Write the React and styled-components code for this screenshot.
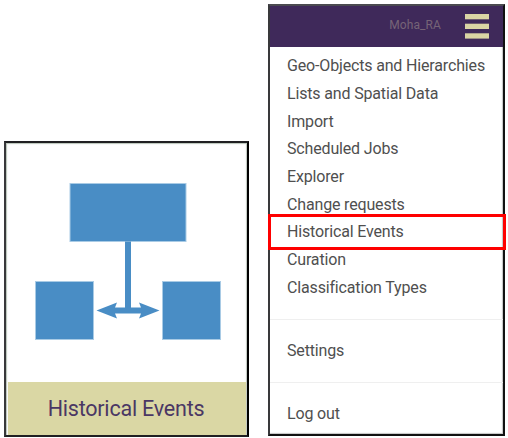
import React from "react";
import styled, { createGlobalStyle } from "styled-components";

const GlobalStyle = createGlobalStyle`
  * { box-sizing: border-box; }
  body { margin: 0; background: #fff; font-family: Roboto, sans-serif; overflow: hidden; }
`;

const Page = styled.main`
  display: flex;
  align-items: flex-start;
  gap: 19px;
  width: 508px;
  height: 438px;
  padding: 4px 0 0 4px;
`;

const Card = styled.section`
  display: flex;
  flex-direction: column;
  flex: none;
  width: 245px;
  height: 296px;
  margin-top: 137px;
  padding: 0 1px 0 2px;
  border: 2px solid #202022;
  border-right-color: #000;
  border-left-color: #38383a;
  box-shadow: inset 1px 1px 1px #b9c4b9, inset -1px 0 1px #bdc5bd;
`;

const Diagram = styled.svg`
  display: block;
  width: 238px;
  height: 239px;
  fill: #498dc5;
`;

const CardTitle = styled.h2`
  display: flex;
  align-items: center;
  justify-content: center;
  flex: 1;
  margin: 0;
  padding-right: 2px;
  background: #dad7a4;
  color: #4a3764;
  font-size: 21.5px;
  font-weight: 400;
  letter-spacing: -0.22px;
`;

const Menu = styled.nav`
  display: flex;
  flex-direction: column;
  flex: none;
  width: 237px;
  height: 432px;
  border: 2px solid #111;
  border-top-color: #4b4a50;
  border-left-color: #39393b;
  box-shadow: inset -1px -1px 1px #c4c4c4;
`;

const MenuHeader = styled.header`
  display: flex;
  align-items: center;
  justify-content: flex-end;
  gap: 24px;
  height: 41px;
  padding-right: 14px;
  background: #3f295a;
  color: #766477;
  font-size: 12px;
`;

const UserName = styled.span`
  padding-bottom: 4px;
  letter-spacing: 0.1px;
`;

const MenuIcon = styled.svg`
  width: 24px;
  height: 25px;
  fill: #dad5a4;
`;

const MenuGroup = styled.ul`
  display: flex;
  flex-direction: column;
  justify-content: ${({ $centered }) => ($centered ? "center" : "flex-start")};
  height: ${({ $height }) => $height}px;
  margin: 0;
  padding: ${({ $top }) => $top}px 0 ${({ $bottom = 0 }) => $bottom}px;
  border-bottom: ${({ $last }) => ($last ? "0" : "1px solid #efefef")};
  list-style: none;
`;

const MenuItem = styled.li`
  position: relative;
  display: flex;
  align-items: center;
  height: 27.7px;
  flex: none;
  padding-left: 17px;
  color: #4f4f4f;
  font-size: 16px;
  letter-spacing: -0.16px;
  white-space: nowrap;
`;

const Highlight = styled.span`
  position: absolute;
  top: -4px;
  right: -3px;
  left: -2px;
  height: 36px;
  border: 3px solid #fe0000;
`;

const items = ["Geo-Objects and Hierarchies", "Lists and Spatial Data", "Import", "Scheduled Jobs", "Explorer", "Change requests", "Historical Events", "Curation", "Classification Types"];

export default function App() {
  return (
    <>
      <GlobalStyle />
      <Page>
        <Card>
          <Diagram viewBox="8 143 238 239" aria-hidden="true">
            <g stroke="#a9cbe5" strokeWidth="1">
              <rect x="70" y="183.5" width="116" height="58" />
              <rect x="35.5" y="281.5" width="58" height="58" />
              <rect x="162.5" y="281.5" width="58" height="58" />
            </g>
            <path d="M125 241.5h6v66h10l-2-5 20.5 8-20.5 8 2-5h-26l2 5-20.5-8 20.5-8-2 5h10z" />
          </Diagram>
          <CardTitle>Historical Events</CardTitle>
        </Card>
        <Menu>
          <MenuHeader>
            <UserName>Moha_RA</UserName>
            <MenuIcon viewBox="0 0 24 25" aria-hidden="true">
              <rect y="0" width="24" height="5.3" />
              <rect y="9.7" width="24" height="5.3" />
              <rect y="19.3" width="24" height="5.3" />
            </MenuIcon>
          </MenuHeader>
          <MenuGroup $height={273} $top={5}>
            {items.map((label) => (
              <MenuItem key={label}>
                {label}
                {label === "Historical Events" && <Highlight />}
              </MenuItem>
            ))}
          </MenuGroup>
          <MenuGroup $height={63} $top={0} $bottom={2} $centered>
            <MenuItem>Settings</MenuItem>
          </MenuGroup>
          <MenuGroup $height={51} $top={10} $last $centered>
            <MenuItem>Log out</MenuItem>
          </MenuGroup>
        </Menu>
      </Page>
    </>
  );
}
